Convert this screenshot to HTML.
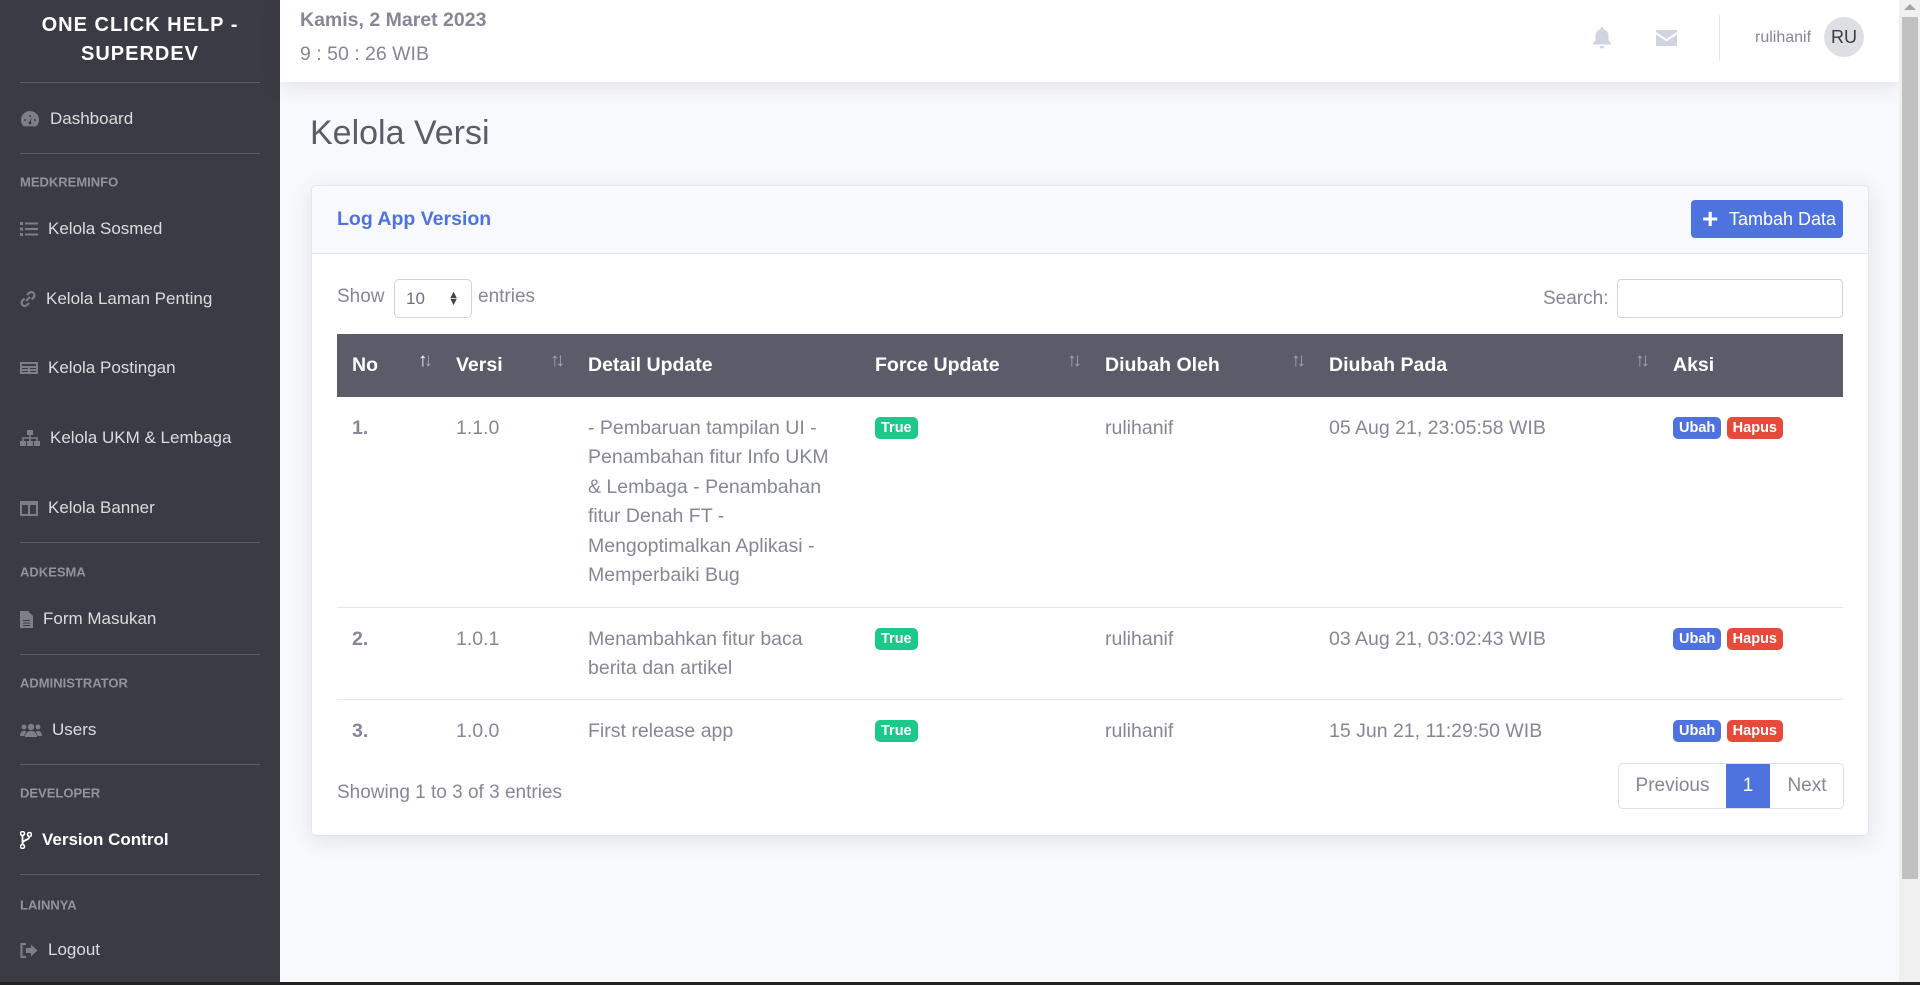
<!DOCTYPE html>
<html><head><meta charset="utf-8">
<style>
*{box-sizing:border-box;margin:0;padding:0}
html,body{width:1920px;height:985px;overflow:hidden}
body{background:#f8f9fc;font-family:"Liberation Sans",sans-serif;color:#858796;position:relative}
.sb{position:absolute;left:0;top:0;width:280px;height:982px;background:#3a3b45}
.brand{position:absolute;left:0;width:280px;text-align:center;color:#fff;font-weight:bold;font-size:20px;letter-spacing:1px}
.hr{position:absolute;left:20px;width:240px;height:1px;background:rgba(255,255,255,.18)}
.sec{position:absolute;left:20px;font-size:13px;font-weight:bold;color:rgba(255,255,255,.45);transform:translateY(-50%)}
.nav{position:absolute;left:20px;font-size:17px;color:rgba(255,255,255,.82);transform:translateY(-50%);display:flex;align-items:center;white-space:nowrap}
.nav svg{margin-right:10px;fill:rgba(255,255,255,.35)}
.nav.act{color:#fff;font-weight:bold}
.nav.act svg{fill:#fff}
.top{position:absolute;left:280px;top:0;width:1619px;height:82px;background:#fff;box-shadow:0 4px 20px rgba(58,59,69,.12)}
.sbar{position:absolute;left:1899px;top:0;width:21px;height:982px;background:#f0f0f0}
.thumb{position:absolute;left:1902px;top:17px;width:16px;height:862px;background:#c1c1c1}
.botline{position:absolute;left:0;top:982px;width:1920px;height:3px;background:#222}
.card{position:absolute;left:311px;top:185px;width:1558px;height:651px;background:#fff;border:1px solid #e3e6f0;border-radius:5px;box-shadow:0 4px 22px rgba(58,59,69,.12);overflow:hidden}
.chead{position:absolute;left:0;top:0;width:100%;height:68px;background:#f8f9fc;border-bottom:1px solid #e3e6f0}
table{position:absolute;left:25px;top:148px;width:1506px;border-collapse:collapse;table-layout:fixed;font-size:19.5px}
th{background:#5a5c69;color:#fff;font-weight:bold;text-align:left;height:63px;padding:0 15px;position:relative;white-space:nowrap}
th .s{position:absolute;right:12px;top:16px;font-size:19px;color:rgba(255,255,255,.45);font-weight:normal;letter-spacing:-4px}
th .s b{color:#fff;font-weight:normal}
td{vertical-align:top;padding:17px 15px 0;line-height:29.4px;border-top:1px solid #e3e6f0;white-space:nowrap;color:#858796}
.bd{display:inline-block;font-size:14.5px;font-weight:bold;color:#fff;border-radius:5px;padding:0 6px;line-height:22px;vertical-align:top;margin-top:3px}
</style></head><body>
<div class="sb">
 <div class="brand" style="top:11px;line-height:29px">ONE CLICK HELP -<br>SUPERDEV</div>
 <div class="hr" style="top:82px"></div>
 <div class="nav" style="top:119px"><svg width="20" height="18" viewBox="0 0 20 18"><path d="M10 1A9 9 0 0 0 1 10c0 2.5 1 4.7 2.6 6.4h12.8A9 9 0 0 0 10 1zm0 4a1 1 0 1 1 0 2 1 1 0 0 1 0-2zM5 9a1 1 0 1 1 0 2 1 1 0 0 1 0-2zm10 0a1 1 0 1 1 0 2 1 1 0 0 1 0-2zm-5 5.5a1.5 1.5 0 0 1-.6-2.9L12 7l-1.2 4.8a1.5 1.5 0 0 1-.8 2.7z"/></svg>Dashboard</div>
 <div class="hr" style="top:153px"></div>
 <div class="sec" style="top:182px">MEDKREMINFO</div>
 <div class="nav" style="top:229px"><svg width="18" height="14" viewBox="0 0 18 14"><rect x="0" y="0" width="3" height="3"/><rect x="5" y="0.5" width="13" height="2"/><rect x="0" y="5.5" width="3" height="3"/><rect x="5" y="6" width="13" height="2"/><rect x="0" y="11" width="3" height="3"/><rect x="5" y="11.5" width="13" height="2"/></svg>Kelola Sosmed</div>
 <div class="nav" style="top:299px"><svg width="16" height="16" viewBox="0 0 16 16"><path d="M6 10l4-4M7 4l2-2a3 3 0 0 1 4.5 4.5l-2 2M9 12l-2 2A3 3 0 0 1 2.5 9.5l2-2" stroke="rgba(255,255,255,.35)" stroke-width="2.2" fill="none"/></svg>Kelola Laman Penting</div>
 <div class="nav" style="top:368px"><svg width="18" height="14" viewBox="0 0 18 14"><path d="M0 1h18v12H0zM2 3v2h14V3zm0 4v1h6V7zm8 0v1h6V7zm-8 3v1h6v-1zm8 0v1h6v-1z" fill-rule="evenodd"/></svg>Kelola Postingan</div>
 <div class="nav" style="top:438px"><svg width="20" height="16" viewBox="0 0 20 16"><rect x="7" y="0" width="6" height="5"/><rect x="0" y="11" width="6" height="5"/><rect x="7" y="11" width="6" height="5"/><rect x="14" y="11" width="6" height="5"/><path d="M3 11V8h14v3M10 5v6" stroke="rgba(255,255,255,.35)" stroke-width="1.6" fill="none"/></svg>Kelola UKM &amp; Lembaga</div>
 <div class="nav" style="top:508px"><svg width="18" height="15" viewBox="0 0 18 15"><path d="M0 0h18v15H0zM2 4v9h6V4zm8 0v9h6V4z" fill-rule="evenodd"/></svg>Kelola Banner</div>
 <div class="hr" style="top:542px"></div>
 <div class="sec" style="top:572px">ADKESMA</div>
 <div class="nav" style="top:619px"><svg width="13" height="17" viewBox="0 0 13 17"><path d="M0 0h8l5 5v12H0zM3 9h7v1H3zm0 2.5h7v1H3zm0 2.5h7v1H3z" fill-rule="evenodd"/></svg>Form Masukan</div>
 <div class="hr" style="top:654px"></div>
 <div class="sec" style="top:683px">ADMINISTRATOR</div>
 <div class="nav" style="top:730px"><svg width="22" height="16" viewBox="0 0 22 16"><circle cx="11" cy="5" r="3.2"/><circle cx="4" cy="5" r="2.4"/><circle cx="18" cy="5" r="2.4"/><path d="M5 15c0-4 2.5-6 6-6s6 2 6 6zM0 14c0-3 1.5-5 4-5 1 0 2 .3 2.5.9C5 11 4.5 12.5 4.5 14zM22 14c0-3-1.5-5-4-5-1 0-2 .3-2.5.9 1.5 1.1 2 2.6 2 4.1z"/></svg>Users</div>
 <div class="hr" style="top:764px"></div>
 <div class="sec" style="top:793px">DEVELOPER</div>
 <div class="nav act" style="top:840px"><svg width="12" height="18" viewBox="0 0 12 18"><circle cx="2.5" cy="2.5" r="2" stroke="#fff" stroke-width="1.6" fill="none"/><circle cx="2.5" cy="15.5" r="2" stroke="#fff" stroke-width="1.6" fill="none"/><circle cx="9.5" cy="3.5" r="2" stroke="#fff" stroke-width="1.6" fill="none"/><path d="M2.5 4.5v9M9.5 5.5c0 4-7 3-7 7" stroke="#fff" stroke-width="1.8" fill="none"/></svg>Version Control</div>
 <div class="hr" style="top:874px"></div>
 <div class="sec" style="top:905px">LAINNYA</div>
 <div class="nav" style="top:950px"><svg width="18" height="15" viewBox="0 0 18 15"><path d="M6 1H1.5v13H6" stroke="rgba(255,255,255,.35)" stroke-width="2.2" fill="none"/><path d="M6 5h5V1.5l6.5 6-6.5 6V10H6z"/></svg>Logout</div>
</div>
<div class="top">
 <div style="position:absolute;left:20px;top:9px;font-size:19.5px;font-weight:bold;color:#858796">Kamis, 2 Maret 2023</div>
 <div style="position:absolute;left:20px;top:43px;font-size:19.5px;color:#858796">9 : 50 : 26 WIB</div>
 <svg style="position:absolute;left:1312px;top:27px" width="20" height="22" viewBox="0 0 20 22"><path d="M10 0c1 0 1.5.7 1.5 1.5v.7C15 3 16.5 6 16.5 9v4l2.5 3v1.5H1V16l2.5-3V9C3.5 6 5 3 8.5 2.2v-.7C8.5.7 9 0 10 0zM7.5 19h5a2.5 2.5 0 0 1-5 0z" fill="#d1d3e2"/></svg>
 <svg style="position:absolute;left:1376px;top:30px" width="21" height="16" viewBox="0 0 21 16"><path d="M0 0h21v2L10.5 9 0 2zM0 4.5l10.5 7 10.5-7V16H0z" fill="#d1d3e2"/></svg>
 <div style="position:absolute;left:1439px;top:15px;width:1px;height:46px;background:#e3e6f0"></div>
 <div style="position:absolute;left:1475px;top:29px;font-size:16px;color:#858796">rulihanif</div>
 <div style="position:absolute;left:1544px;top:17px;width:40px;height:40px;border-radius:50%;background:#dddfe2;color:#3a3b45;font-size:18px;line-height:40px;text-align:center">RU</div>
</div>
<div style="position:absolute;left:310px;top:114px;font-size:34px;color:#5a5c69">Kelola Versi</div>
<div class="card">
 <div class="chead">
  <div style="position:absolute;left:25px;top:22px;font-size:19.5px;font-weight:bold;color:#4e73df">Log App Version</div>
  <div style="position:absolute;left:1379px;top:14px;width:152px;height:38px;background:#4e73df;border-radius:4px;color:#fff;font-size:18px;line-height:38px;padding-left:38px"><span style="position:absolute;left:11px;top:0;font-size:28px;font-weight:bold">+</span>Tambah Data</div>
 </div>
 <div style="position:absolute;left:25px;top:100px;font-size:19px">Show</div>
 <div style="position:absolute;left:82px;top:93px;width:78px;height:39px;border:1px solid #d1d3e2;border-radius:5px;font-size:17px;color:#6e707e;line-height:37px;padding-left:11px">10<span style="position:absolute;right:12px;top:0;font-size:11px;line-height:7px;padding-top:12px;color:#444">▲<br>▼</span></div>
 <div style="position:absolute;left:166px;top:100px;font-size:19px">entries</div>
 <div style="position:absolute;left:1231px;top:102px;font-size:19px">Search:</div>
 <div style="position:absolute;left:1305px;top:93px;width:226px;height:39px;border:1px solid #d1d3e2;border-radius:4px"></div>
 <table>
  <colgroup><col style="width:104px"><col style="width:132px"><col style="width:287px"><col style="width:230px"><col style="width:224px"><col style="width:344px"><col style="width:185px"></colgroup>
  <tr><th>No<span class="s"><b>↑</b>↓</span></th><th>Versi<span class="s">↑↓</span></th><th>Detail Update</th><th>Force Update<span class="s">↑↓</span></th><th>Diubah Oleh<span class="s">↑↓</span></th><th>Diubah Pada<span class="s">↑↓</span></th><th>Aksi</th></tr>
  <tr style="height:210px"><td style="border-top:none;font-weight:bold">1.</td><td style="border-top:none">1.1.0</td><td style="border-top:none">- Pembaruan tampilan UI -<br>Penambahan fitur Info UKM<br>&amp; Lembaga - Penambahan<br>fitur Denah FT -<br>Mengoptimalkan Aplikasi -<br>Memperbaiki Bug</td><td style="border-top:none"><span class="bd" style="background:#1cc88a">True</span></td><td style="border-top:none">rulihanif</td><td style="border-top:none">05 Aug 21, 23:05:58 WIB</td><td style="border-top:none"><span class="bd" style="background:#4e73df">Ubah</span> <span class="bd" style="background:#e74a3b">Hapus</span></td></tr>
  <tr style="height:92px"><td style="font-weight:bold">2.</td><td>1.0.1</td><td>Menambahkan fitur baca<br>berita dan artikel</td><td><span class="bd" style="background:#1cc88a">True</span></td><td>rulihanif</td><td>03 Aug 21, 03:02:43 WIB</td><td><span class="bd" style="background:#4e73df">Ubah</span> <span class="bd" style="background:#e74a3b">Hapus</span></td></tr>
  <tr style="height:60px"><td style="font-weight:bold">3.</td><td>1.0.0</td><td>First release app</td><td><span class="bd" style="background:#1cc88a">True</span></td><td>rulihanif</td><td>15 Jun 21, 11:29:50 WIB</td><td><span class="bd" style="background:#4e73df">Ubah</span> <span class="bd" style="background:#e74a3b">Hapus</span></td></tr>
 </table>
 <div style="position:absolute;left:25px;top:596px;font-size:19px">Showing 1 to 3 of 3 entries</div>
 <div style="position:absolute;left:1306px;top:577px;width:226px;height:46px;border:1px solid #dddfeb;border-radius:5px;font-size:19px;overflow:hidden">
  <div style="position:absolute;left:0;top:0;width:107px;height:44px;line-height:44px;text-align:center">Previous</div>
  <div style="position:absolute;left:107px;top:0;width:44px;height:44px;line-height:44px;text-align:center;background:#4e73df;color:#fff">1</div>
  <div style="position:absolute;left:151px;top:0;width:74px;height:44px;line-height:44px;text-align:center">Next</div>
 </div>
</div>
<div class="sbar"></div><div class="thumb"></div>
<div style="position:absolute;left:1904px;top:4px;width:0;height:0;border-left:6px solid transparent;border-right:6px solid transparent;border-bottom:6px solid #a3a3a3"></div>
<div class="botline"></div>
</body></html>
